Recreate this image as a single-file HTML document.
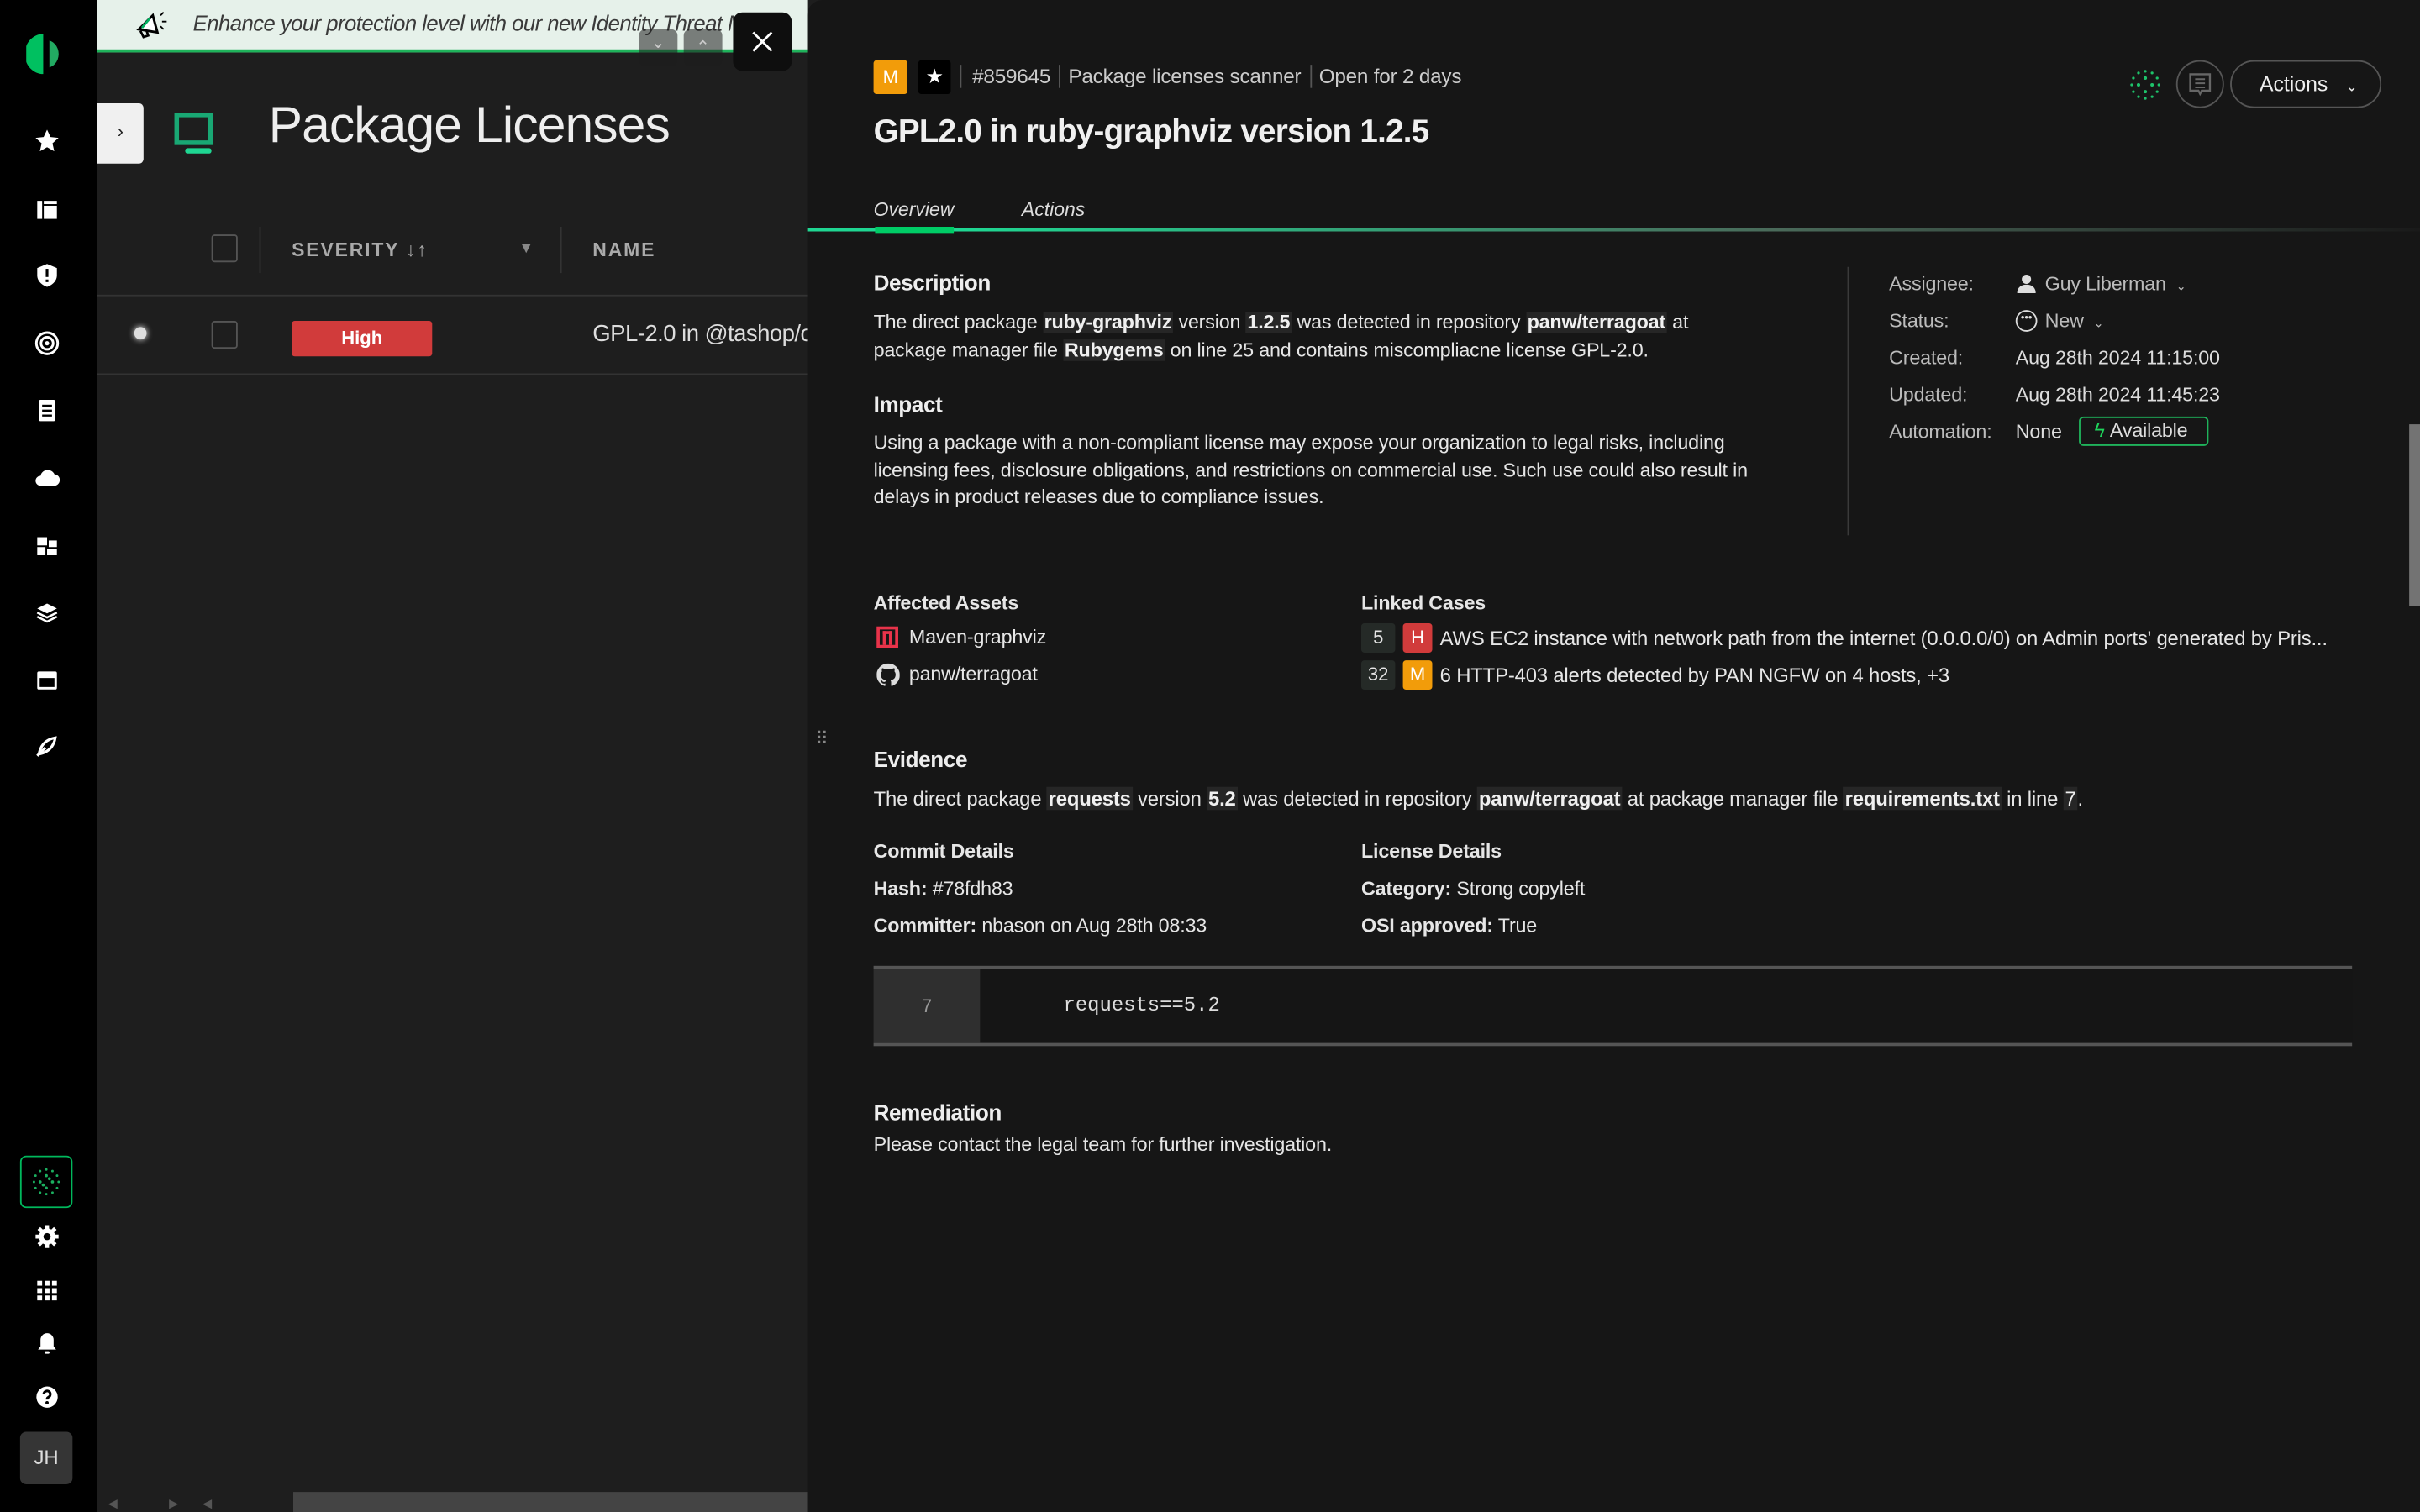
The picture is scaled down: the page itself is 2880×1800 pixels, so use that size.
<!DOCTYPE html>
<html><head><meta charset="utf-8"><style>
*{margin:0;padding:0;box-sizing:border-box}
html,body{width:2880px;height:1800px;overflow:hidden;background:#1e1e1e}
#w{position:absolute;left:0;top:0;width:1568px;height:980px;transform:scale(1.836735);transform-origin:0 0;font-family:"Liberation Sans",sans-serif;color:#e6e6e6;background:#1e1e1e}
.a{position:absolute}
.t{font-size:12.7px;letter-spacing:-0.1px;white-space:nowrap}
b.h{font-weight:bold;background:#262626;color:#f0f0f0;padding:0 1px}
.side{left:0;top:0;width:63px;height:980px;background:#000}
.ic{left:22px;width:17px;height:17px;fill:#fff}
h3{font-size:14.2px;font-weight:bold;color:#eee;letter-spacing:-0.2px}
.lb{color:#bbb}
.row{position:absolute;height:24px;line-height:24px}
</style></head><body><div id="w">
<!-- sidebar -->
<div class="a side"></div>
<svg class="a" style="left:17px;top:20px" width="26" height="30" viewBox="0 0 26 30"><path d="M11 2 A12 13 0 0 0 11 28 Z" fill="#00c060"/><path d="M13 6 A8 9 0 0 1 13 24 Z" fill="#2bd47a" opacity=".8"/><rect x="12" y="5" width="3" height="20" fill="#000"/></svg>
<svg class="a ic" style="top:83px" viewBox="0 0 16 16"><path d="M8 1l2.1 4.5 4.9.5-3.7 3.3 1.1 4.9L8 11.7 3.6 14.2l1.1-4.9L1 6l4.9-.5z"/></svg>
<svg class="a ic" style="top:127px" viewBox="0 0 16 16"><rect x="2" y="3" width="3" height="11"/><rect x="6" y="3" width="8" height="2"/><rect x="6" y="6" width="8" height="8"/></svg>
<svg class="a ic" style="top:170px" viewBox="0 0 16 16"><path d="M8 1l6 2.5V8c0 3.5-3 6-6 7-3-1-6-3.5-6-7V3.5z"/><rect x="7.2" y="4" width="1.6" height="5" fill="#000"/><rect x="7.2" y="10.5" width="1.6" height="1.6" fill="#000"/></svg>
<svg class="a ic" style="top:214px" viewBox="0 0 16 16"><circle cx="8" cy="8" r="6.5" fill="none" stroke="#fff" stroke-width="1.5"/><circle cx="8" cy="8" r="3.7" fill="none" stroke="#fff" stroke-width="1.5"/><circle cx="8" cy="8" r="1.3"/></svg>
<svg class="a ic" style="top:257px" viewBox="0 0 16 16"><rect x="3" y="2" width="10" height="13" rx="1"/><rect x="5" y="5" width="6" height="1.2" fill="#000"/><rect x="5" y="8" width="6" height="1.2" fill="#000"/><rect x="5" y="11" width="6" height="1.2" fill="#000"/></svg>
<svg class="a ic" style="top:301px" viewBox="0 0 16 16"><path d="M4 13a3 3 0 0 1 0-6 4.5 4.5 0 0 1 8.5-1A3.5 3.5 0 0 1 12 13z"/></svg>
<svg class="a ic" style="top:345px" viewBox="0 0 16 16"><rect x="2" y="3" width="6" height="5"/><rect x="9" y="5" width="5" height="4"/><rect x="2" y="9" width="5" height="5"/><rect x="8" y="10" width="6" height="4"/></svg>
<svg class="a ic" style="top:388px" viewBox="0 0 16 16"><path d="M8 3l6 3-6 3-6-3z"/><path d="M2 8.5l6 3 6-3M2 11l6 3 6-3" fill="none" stroke="#fff" stroke-width="1.3"/></svg>
<svg class="a ic" style="top:432px" viewBox="0 0 16 16"><rect x="2" y="3" width="12" height="11" rx="1"/><rect x="3.5" y="7" width="9" height="5.5" fill="#000"/></svg>
<svg class="a ic" style="top:475px" viewBox="0 0 16 16"><path d="M3 13c1-5 4-9 10-10-1 6-5 9-10 10z" fill="none" stroke="#fff" stroke-width="1.6"/><path d="M2 14l5-5" stroke="#fff" stroke-width="1.6"/></svg>
<div class="a" style="left:13px;top:749px;width:34px;height:34px;border:1.5px solid #00b85c;border-radius:4px"></div>
<svg class="a" style="left:20px;top:756px" width="20" height="20" viewBox="0 0 20 20" fill="#1ec26a"><g opacity=".9"><circle cx="10" cy="2" r=".8"/><circle cx="14" cy="3" r=".8"/><circle cx="17" cy="6" r=".8"/><circle cx="18" cy="10" r=".8"/><circle cx="17" cy="14" r=".8"/><circle cx="14" cy="17" r=".8"/><circle cx="10" cy="18" r=".8"/><circle cx="6" cy="17" r=".8"/><circle cx="3" cy="14" r=".8"/><circle cx="2" cy="10" r=".8"/><circle cx="3" cy="6" r=".8"/><circle cx="6" cy="3" r=".8"/><circle cx="10" cy="6" r="1"/><circle cx="14" cy="10" r="1"/><circle cx="10" cy="14" r="1"/><circle cx="6" cy="10" r="1"/><circle cx="12" cy="8" r="1"/><circle cx="8" cy="12" r="1"/></g></svg>
<svg class="a ic" style="top:793px" viewBox="0 0 16 16"><circle cx="8" cy="8" r="5"/><g stroke="#fff" stroke-width="2.4"><path d="M8 1v14M1 8h14M3 3l10 10M13 3L3 13"/></g><circle cx="8" cy="8" r="2.2" fill="#000"/></svg>
<svg class="a ic" style="top:828px" viewBox="0 0 16 16"><g><rect x="2" y="2" width="3" height="3"/><rect x="6.5" y="2" width="3" height="3"/><rect x="11" y="2" width="3" height="3"/><rect x="2" y="6.5" width="3" height="3"/><rect x="6.5" y="6.5" width="3" height="3"/><rect x="11" y="6.5" width="3" height="3"/><rect x="2" y="11" width="3" height="3"/><rect x="6.5" y="11" width="3" height="3"/><rect x="11" y="11" width="3" height="3"/></g></svg>
<svg class="a ic" style="top:862px" viewBox="0 0 16 16"><path d="M8 2a4 4 0 0 1 4 4v4l1.5 2h-11L4 10V6a4 4 0 0 1 4-4z"/><rect x="6.5" y="13" width="3" height="1.5" rx=".7"/></svg>
<svg class="a ic" style="top:897px" viewBox="0 0 16 16"><circle cx="8" cy="8" r="6.5"/><path d="M6 6.3a2 2 0 1 1 2.8 1.8c-.6.3-.8.7-.8 1.4" fill="none" stroke="#000" stroke-width="1.6"/><circle cx="8" cy="11.5" r="1" fill="#000"/></svg>
<div class="a" style="left:13px;top:928px;width:34px;height:34px;background:#353535;border-radius:4px;font-size:13px;color:#ddd;text-align:center;line-height:34px">JH</div>

<!-- left page -->
<div class="a" style="left:63px;top:0;width:460px;height:34px;background:#e6f1ea;border-bottom:2px solid #1fb35b"></div>
<svg class="a" style="left:86px;top:6px" width="24" height="22" viewBox="0 0 24 22"><path d="M4 13l9-9 3 11z" fill="#fff" stroke="#000" stroke-width="1.6"/><path d="M5 14l2 4 3-1-1-3" fill="none" stroke="#000" stroke-width="1.5"/><path d="M6 12l5-6" stroke="#00b060" stroke-width="1.5"/><path d="M18 4l2-2M19 8h3M18 11l2 2" stroke="#000" stroke-width="1"/></svg>
<div class="a" style="left:125px;top:7px;font-size:14px;font-style:italic;color:#3a3a3a;white-space:nowrap;letter-spacing:-0.3px;width:398px;overflow:hidden">Enhance your protection level with our new Identity Threat Mod</div>
<div class="a" style="left:414px;top:19px;width:25px;height:24px;background:rgba(30,30,30,.55);border-radius:4px;color:#ccc;font-size:11px;text-align:center;line-height:18px">⌄</div>
<div class="a" style="left:443px;top:19px;width:25px;height:24px;background:rgba(30,30,30,.55);border-radius:4px;color:#ccc;font-size:11px;text-align:center;line-height:24px">⌃</div>
<div class="a" style="left:475px;top:8px;width:38px;height:38px;background:#0e0e0e;border-radius:6px"></div>
<svg class="a" style="left:486px;top:19px" width="16" height="16"><path d="M2 2l12 12M14 2L2 14" stroke="#fff" stroke-width="1.5"/></svg>
<div class="a" style="left:63px;top:67px;width:30px;height:39px;background:#f0f0f0;border-radius:0 3px 3px 0;color:#222;font-size:12px;text-align:center;line-height:37px">›</div>
<svg class="a" style="left:112px;top:72px" width="30" height="30" viewBox="0 0 30 30"><rect x="2.5" y="2.5" width="22" height="18" fill="none" stroke="#19a874" stroke-width="3"/><rect x="8" y="24" width="17" height="3.5" rx="1.5" fill="#1fd692"/></svg>
<div class="a" style="left:174px;top:62px;font-size:33px;color:#eee;letter-spacing:-0.5px;white-space:nowrap">Package Licenses</div>
<div class="a" style="left:137px;top:152px;width:17px;height:18px;border:1.3px solid #555;border-radius:2px"></div>
<div class="a" style="left:168px;top:147px;width:1px;height:30px;background:#333"></div>
<div class="a" style="left:363px;top:147px;width:1px;height:30px;background:#333"></div>
<div class="a" style="left:189px;top:155px;font-size:12.5px;font-weight:bold;color:#aaa;letter-spacing:1px">SEVERITY ↓↑</div>
<div class="a" style="left:336px;top:156px;font-size:10px;color:#888">▼</div>
<div class="a" style="left:384px;top:155px;font-size:12.5px;font-weight:bold;color:#aaa;letter-spacing:1px">NAME</div>
<div class="a" style="left:63px;top:191px;width:460px;height:1px;background:#333"></div>
<div class="a" style="left:87px;top:212px;width:8px;height:8px;border-radius:50%;background:#ddd;box-shadow:0 0 4px #fff"></div>
<div class="a" style="left:137px;top:208px;width:17px;height:18px;border:1.3px solid #555;border-radius:2px"></div>
<div class="a" style="left:189px;top:208px;width:91px;height:23px;background:#d13b3b;border-radius:2px;color:#fff;font-size:12px;font-weight:bold;text-align:center;line-height:23px">High</div>
<div class="a" style="left:384px;top:208px;font-size:15px;color:#ddd;white-space:nowrap;letter-spacing:-0.3px;width:139px;overflow:hidden">GPL-2.0 in @tashop/c</div>
<div class="a" style="left:63px;top:242px;width:460px;height:1px;background:#333"></div>
<div class="a" style="left:190px;top:967px;width:333px;height:13px;background:#444"></div>
<div class="a" style="left:70px;top:970px;font-size:8px;color:#555">◀ &nbsp;&nbsp;&nbsp;&nbsp;&nbsp;&nbsp;&nbsp;&nbsp;&nbsp;&nbsp;&nbsp;&nbsp;&nbsp;&nbsp;▶ &nbsp;&nbsp;&nbsp;&nbsp;&nbsp;&nbsp;◀</div>

<!-- right panel -->
<div class="a" style="left:523px;top:0;width:1045px;height:980px;background:#161616;border-radius:10px 0 0 0"></div>
<div class="a" style="left:1561px;top:275px;width:7px;height:118px;background:#737373"></div>
<div class="a" style="left:528px;top:472px;font-size:12px;color:#888">⠿</div>
<div class="a" style="left:566px;top:39px;width:22px;height:22px;background:#f29c0a;border-radius:2px;color:#fff;font-size:12px;text-align:center;line-height:22px">M</div>
<div class="a" style="left:595px;top:39px;width:21px;height:22px;background:#000;border-radius:2px;color:#fff;font-size:13px;text-align:center;line-height:22px">★</div>
<div class="a t" style="left:622px;top:42px;font-size:13.2px;color:#ccc">
<span style="border-left:1px solid #555;padding-left:7px">#859645</span>
<span style="border-left:1px solid #555;padding:0 2px 0 5px;margin-left:2px">Package licenses scanner</span>
<span style="border-left:1px solid #555;padding-left:5px">Open for 2 days</span></div>
<svg class="a" style="left:1379px;top:44px" width="22" height="22" viewBox="0 0 20 20" fill="#1ec26a"><circle cx="10" cy="2" r=".8"/><circle cx="14" cy="3" r=".8"/><circle cx="17" cy="6" r=".8"/><circle cx="18" cy="10" r=".8"/><circle cx="17" cy="14" r=".8"/><circle cx="14" cy="17" r=".8"/><circle cx="10" cy="18" r=".8"/><circle cx="6" cy="17" r=".8"/><circle cx="3" cy="14" r=".8"/><circle cx="2" cy="10" r=".8"/><circle cx="3" cy="6" r=".8"/><circle cx="6" cy="3" r=".8"/><circle cx="10" cy="6" r="1"/><circle cx="14" cy="10" r="1"/><circle cx="10" cy="14" r="1"/><circle cx="6" cy="10" r="1"/></svg>
<div class="a" style="left:1410px;top:39px;width:31px;height:31px;border:1.3px solid #555;border-radius:50%"></div>
<svg class="a" style="left:1417px;top:46px" width="17" height="17" viewBox="0 0 16 16"><path d="M2 2h12v10H9l-1 2-1-2H2z" fill="none" stroke="#666" stroke-width="1.2"/><path d="M5 5h6M5 7.5h6M5 10h6" stroke="#666"/></svg>
<div class="a" style="left:1445px;top:39px;width:98px;height:31px;border:1.3px solid #555;border-radius:16px;color:#eee;font-size:13.5px;line-height:29px;padding-left:18px">Actions <span style="font-size:9px;margin-left:8px">⌄</span></div>
<div class="a" style="left:566px;top:74px;font-size:21px;font-weight:bold;color:#f0f0f0;letter-spacing:-0.4px;white-space:nowrap">GPL2.0 in ruby-graphviz version 1.2.5</div>
<div class="a" style="left:566px;top:129px;font-size:12.5px;font-style:italic;color:#ddd">Overview</div>
<div class="a" style="left:662px;top:129px;font-size:12.5px;font-style:italic;color:#ddd">Actions</div>
<div class="a" style="left:523px;top:148px;width:1045px;height:2px;background:linear-gradient(90deg,#1fd692 0%,#1fd692 10%,#4a6a5a 60%,#1a1a1a 100%)"></div>
<div class="a" style="left:567px;top:147px;width:51px;height:4px;background:#00cc66"></div>

<h3 class="a" style="left:566px;top:176px">Description</h3>
<div class="a t" style="left:566px;top:200px;line-height:18px">The direct package <b class="h">ruby-graphviz</b> version <b class="h">1.2.5</b> was detected in repository <b class="h">panw/terragoat</b> at<br>package manager file <b class="h">Rubygems</b> on line 25 and contains miscompliacne license GPL-2.0.</div>
<h3 class="a" style="left:566px;top:255px">Impact</h3>
<div class="a t" style="left:566px;top:279px;line-height:17.5px">Using a package with a non-compliant license may expose your organization to legal risks, including<br>licensing fees, disclosure obligations, and restrictions on commercial use. Such use could also result in<br>delays in product releases due to compliance issues.</div>
<div class="a" style="left:1197px;top:173px;width:1px;height:174px;background:#3a3a3a"></div>
<div class="row t lb" style="left:1224px;top:172px">Assignee:</div>
<div class="row t lb" style="left:1224px;top:196px">Status:</div>
<div class="row t lb" style="left:1224px;top:220px">Created:</div>
<div class="row t lb" style="left:1224px;top:244px">Updated:</div>
<div class="row t lb" style="left:1224px;top:268px">Automation:</div>
<svg class="a" style="left:1306px;top:177px" width="14" height="14" viewBox="0 0 14 14"><circle cx="7" cy="4" r="3" fill="#ddd"/><path d="M1 13c0-4 3-5.5 6-5.5s6 1.5 6 5.5z" fill="#ddd"/></svg>
<div class="row t" style="left:1325px;top:172px;color:#bbb">Guy Liberman <span style="font-size:8px;margin-left:3px">⌄</span></div>
<div class="a" style="left:1306px;top:201px;width:14px;height:14px;border:1.3px solid #ddd;border-radius:50%;font-size:7px;text-align:center;line-height:10px;color:#ddd">•••</div>
<div class="row t" style="left:1325px;top:196px;color:#bbb">New <span style="font-size:8px;margin-left:3px">⌄</span></div>
<div class="row t" style="left:1306px;top:220px;color:#ddd">Aug 28th 2024 11:15:00</div>
<div class="row t" style="left:1306px;top:244px;color:#ddd">Aug 28th 2024 11:45:23</div>
<div class="row t" style="left:1306px;top:268px;color:#ddd">None</div>
<div class="a t" style="left:1347px;top:270px;width:84px;height:19px;border:1.3px solid #1fb35b;border-radius:3px;color:#ddd;line-height:17px;padding-left:9px"><span style="color:#1fd35b">ϟ</span> Available</div>

<div class="a t" style="left:566px;top:384px;font-weight:bold;font-size:12.7px">Affected Assets</div>
<div class="a" style="left:568px;top:406px;width:14px;height:14px;border:2px solid #e8334a;"></div>
<div class="a" style="left:572px;top:409px;width:6px;height:9px;border:2px solid #e8334a;border-bottom:none"></div>
<div class="a t" style="left:589px;top:406px">Maven-graphviz</div>
<svg class="a" style="left:568px;top:430px" width="15" height="15" viewBox="0 0 16 16"><path fill="#ddd" d="M8 0C3.58 0 0 3.58 0 8c0 3.54 2.29 6.530 5.47 7.59.4.07.55-.17.55-.38v-1.34c-2.23.48-2.7-1.07-2.7-1.07-.36-.92-.89-1.170-.89-1.17-.73-.5.06-.49.06-.49.8.06 1.23.83 1.23.83.71 1.22 1.87.87 2.33.66.07-.52.28-.87.51-1.07-1.78-.2-3.64-.89-3.64-3.95 0-.87.31-1.59.82-2.150-.08-.2-.36-1.02.08-2.12 0 0 .67-.21 2.2.82a7.6 7.6 0 0 1 4 0c1.53-1.04 2.2-.82 2.2-.82.44 1.1.16 1.92.08 2.12.51.56.82 1.27.82 2.15 0 3.07-1.87 3.75-3.65 3.95.29.25.54.73.54 1.48v2.2c0 .21.15.46.55.38A8 8 0 0 0 16 8c0-4.42-3.58-8-8-8z"/></svg>
<div class="a t" style="left:589px;top:430px">panw/terragoat</div>
<div class="a t" style="left:882px;top:384px;font-weight:bold;font-size:12.7px">Linked Cases</div>
<div class="a" style="left:882px;top:404px;width:22px;height:19px;background:#252a27;border-radius:2px;font-size:12px;text-align:center;line-height:19px">5</div>
<div class="a" style="left:909px;top:404px;width:19px;height:19px;background:#d13b3b;border-radius:2px;font-size:12px;text-align:center;line-height:19px;color:#fff">H</div>
<div class="a t" style="left:933px;top:406px;font-size:13px">AWS EC2 instance with network path from the internet (0.0.0.0/0) on Admin ports' generated by Pris...</div>
<div class="a" style="left:882px;top:428px;width:22px;height:19px;background:#252a27;border-radius:2px;font-size:12px;text-align:center;line-height:19px">32</div>
<div class="a" style="left:909px;top:428px;width:19px;height:19px;background:#f29c0a;border-radius:2px;font-size:12px;text-align:center;line-height:19px;color:#fff">M</div>
<div class="a t" style="left:933px;top:430px;font-size:13px">6 HTTP-403 alerts detected by PAN NGFW on 4 hosts, +3</div>

<h3 class="a" style="left:566px;top:485px">Evidence</h3>
<div class="a t" style="left:566px;top:510px;font-size:13px">The direct package <b class="h">requests</b> version <b class="h">5.2</b> was detected in repository <b class="h">panw/terragoat</b> at package manager file <b class="h">requirements.txt</b> in line <b class="h" style="font-weight:normal">7</b>.</div>
<div class="row t" style="left:566px;top:540px;font-weight:bold">Commit Details</div>
<div class="row t" style="left:566px;top:564px"><b>Hash:</b> #78fdh83</div>
<div class="row t" style="left:566px;top:588px"><b>Committer:</b> nbason on Aug 28th 08:33</div>
<div class="row t" style="left:882px;top:540px;font-weight:bold">License Details</div>
<div class="row t" style="left:882px;top:564px"><b>Category:</b> Strong copyleft</div>
<div class="row t" style="left:882px;top:588px"><b>OSI approved:</b> True</div>
<div class="a" style="left:566px;top:626px;width:958px;height:52px;border-top:2px solid #555;border-bottom:2px solid #555;background:#151515"></div>
<div class="a" style="left:566px;top:628px;width:69px;height:48px;background:#2f2f2f;color:#999;font-size:12px;text-align:center;line-height:48px">7</div>
<div class="a" style="left:689px;top:644px;font-family:'Liberation Mono',monospace;font-size:13px;color:#ddd">requests==5.2</div>
<h3 class="a" style="left:566px;top:714px">Remediation</h3>
<div class="a t" style="left:566px;top:735px">Please contact the legal team for further investigation.</div>
</div></body></html>
